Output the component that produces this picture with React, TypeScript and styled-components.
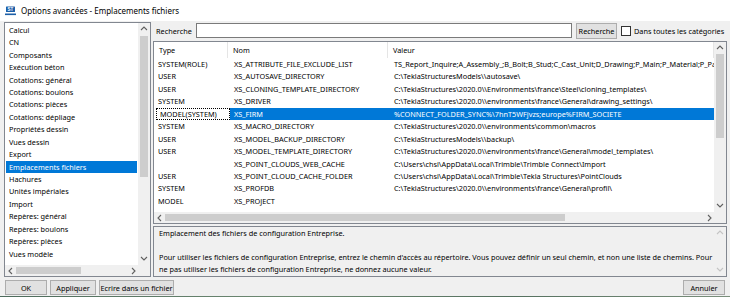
import React from 'react';
import styled, { createGlobalStyle } from 'styled-components';

const FONT = `"Noto Sans", "Open Sans", sans-serif`;
const SEL = '#0078d7';

const GlobalStyle = createGlobalStyle`
  html, body {
    margin: 0;
    padding: 0;
    background: #f0f0f0;
  }
`;

const Window = styled.div`
  width: 730px;
  height: 297px;
  display: flex;
  flex-direction: column;
  background: #f0f0f0;
  font-family: ${FONT};
  font-size: 7.3px;
  color: #000;
  overflow: hidden;
`;

const TitleBar = styled.div`
  height: 21px;
  flex: none;
  display: flex;
  align-items: center;
  gap: 5px;
  padding-left: 5px;
  background: #fff;
  font-size: 8px;
`;

const Body = styled.div`
  height: 255px;
  flex: none;
  display: flex;
  padding: 1px 3px 0 4px;
  gap: 2px;
`;

const CategoryPanel = styled.div`
  width: 145px;
  flex: none;
  display: flex;
  flex-direction: column;
  border: 1px solid #828790;
  background: #fff;
`;

const ListArea = styled.div`
  flex: 1;
  display: flex;
  min-height: 0;
`;

const ListItems = styled.div`
  flex: 1;
  padding: 0.8px 1px 0 1px;
  overflow: hidden;
`;

const ListItem = styled.div<{ $selected?: boolean }>`
  height: 12.45px;
  line-height: 12.45px;
  padding-left: 3px;
  white-space: nowrap;
  background: ${(p) => (p.$selected ? SEL : 'transparent')};
  color: ${(p) => (p.$selected ? '#fff' : '#000')};
`;

const VScroll = styled.div`
  width: 12px;
  flex: none;
  display: flex;
  flex-direction: column;
  background: #f0f0f0;
`;

const HScroll = styled.div`
  height: 11px;
  flex: none;
  display: flex;
  background: #f0f0f0;
`;

const ArrowBox = styled.div<{ $w?: number; $h?: number }>`
  width: ${(p) => p.$w ?? 12}px;
  height: ${(p) => p.$h ?? 12}px;
  flex: none;
  display: flex;
  align-items: center;
  justify-content: center;
`;

const Track = styled.div<{ $vertical?: boolean }>`
  flex: 1;
  display: flex;
  flex-direction: ${(p) => (p.$vertical ? 'column' : 'row')};
  min-width: 0;
  min-height: 0;
`;

const Thumb = styled.div<{ $vertical?: boolean; $offset: number; $length: number }>`
  flex: none;
  background: #cdcdcd;
  ${(p) =>
    p.$vertical
      ? `margin: ${p.$offset}px 2px 0 2px; height: ${p.$length}px;`
      : `margin: 2px 0 2px ${p.$offset}px; width: ${p.$length}px;`}
`;

const Corner = styled.div`
  width: 12px;
  flex: none;
  background: #f0f0f0;
`;

const RightPane = styled.div`
  flex: 1;
  display: flex;
  flex-direction: column;
  min-width: 0;
`;

const SearchRow = styled.div`
  height: 17px;
  flex: none;
  display: flex;
  align-items: center;
  padding-left: 3px;
  margin-bottom: 2px;
`;

const SearchLabel = styled.span`
  width: 40px;
  flex: none;
`;

const SearchInput = styled.div`
  width: 374px;
  height: 13px;
  flex: none;
  background: #fff;
  border: 1px solid #7a7a7a;
`;

const Button = styled.div<{ $width: number }>`
  width: ${(p) => p.$width}px;
  height: 15px;
  flex: none;
  box-sizing: border-box;
  display: flex;
  align-items: center;
  justify-content: center;
  background: #e1e1e1;
  border: 1px solid #adadad;
  white-space: nowrap;
`;

const SearchButton = styled(Button)`
  margin-left: 4px;
  height: 16px;
`;

const CheckBox = styled.div`
  width: 8px;
  height: 8px;
  flex: none;
  margin-left: 4px;
  background: #fff;
  border: 1px solid #333;
`;

const CheckLabel = styled.span`
  margin-left: 3px;
  white-space: nowrap;
`;

const Grid = styled.div`
  height: 181px;
  flex: none;
  display: flex;
  flex-direction: column;
  border: 1px solid #828790;
  background: #fff;
`;

const GridMain = styled.div`
  flex: 1;
  display: flex;
  min-height: 0;
`;

const GridBody = styled.div`
  flex: 1;
  min-width: 0;
  overflow: hidden;
`;

const HeaderRow = styled.div`
  height: 16px;
  display: flex;
`;

const HeaderCell = styled.div<{ $width?: number }>`
  ${(p) => (p.$width ? `width: ${p.$width}px; flex: none;` : 'flex: 1;')}
  box-sizing: border-box;
  padding-left: 5px;
  line-height: 16px;
  border-right: 1px solid #e5e5e5;
  white-space: nowrap;
`;

const GridRow = styled.div`
  height: 12.45px;
  display: flex;
`;

const Cell = styled.div<{ $width?: number; $selected?: boolean }>`
  ${(p) => (p.$width ? `width: ${p.$width}px; flex: none;` : 'flex: 1;')}
  box-sizing: border-box;
  padding-left: 4px;
  line-height: 12.45px;
  white-space: nowrap;
  overflow: hidden;
  background: ${(p) => (p.$selected ? SEL : 'transparent')};
  color: ${(p) => (p.$selected ? '#fff' : '#000')};
`;

const FocusCell = styled.div`
  width: 74px;
  flex: none;
  box-sizing: border-box;
  padding-left: 3px;
  margin-left: 2px;
  line-height: 10.45px;
  border: 1px dotted #000;
  white-space: nowrap;
`;

const Description = styled.div`
  height: 49px;
  flex: none;
  margin-top: 2px;
  display: flex;
  border: 1px solid #828790;
  background: #f0f0f0;
`;

const DescText = styled.div`
  flex: 1;
  padding-left: 5px;
  line-height: 12px;
  white-space: pre;
  overflow: hidden;
`;

const ButtonBar = styled.div`
  height: 17px;
  flex: none;
  margin-top: 2px;
  display: flex;
  align-items: center;
  gap: 3px;
  padding: 0 5px;
`;

const Spacer = styled.div`
  flex: 1;
`;

const DesktopStrip = styled.div`
  flex: 1;
  background: linear-gradient(90deg, #4d6b5c, #6f8a73 40%, #55705f 70%, #7a8f7c);
`;

const Chevron = ({ dir, light }: { dir: 'up' | 'down' | 'left' | 'right'; light?: boolean }) => {
  const pts = {
    up: '1,5 4,2 7,5',
    down: '1,2 4,5 7,2',
    left: '5,1 2,4 5,7',
    right: '3,1 6,4 3,7',
  }[dir];
  return (
    <svg width="8" height="8" viewBox="0 0 8 8">
      <polyline points={pts} fill="none" stroke={light ? '#c4c4c4' : '#606060'} strokeWidth="1.1" />
    </svg>
  );
};

const TeklaIcon = () => (
  <svg width="11" height="10" viewBox="0 0 11 10">
    <rect x="1" y="0.5" width="9" height="5.5" rx="0.5" fill="#1c5fa8" />
    <text x="5.5" y="5" fontSize="4.5" fill="#fff" textAnchor="middle" fontFamily="Liberation Sans, sans-serif" fontWeight="bold">
      ST
    </text>
    <rect x="0" y="7.5" width="11" height="1.6" fill="#1c5fa8" />
  </svg>
);

const categories = [
  'Calcul',
  'CN',
  'Composants',
  'Exécution béton',
  'Cotations: général',
  'Cotations: boulons',
  'Cotations: pièces',
  'Cotations: dépliage',
  'Propriétés dessin',
  'Vues dessin',
  'Export',
  'Emplacements fichiers',
  'Hachures',
  'Unités impériales',
  'Import',
  'Repères: général',
  'Repères: boulons',
  'Repères: pièces',
  'Vues modèle',
];

const rows = [
  ['SYSTEM(ROLE)', 'XS_ATTRIBUTE_FILE_EXCLUDE_LIST', 'TS_Report_Inquire;A_Assembly_;B_Bolt;B_Stud;C_Cast_Unit;D_Drawing;P_Main;P_Material;P_Part;P_Profile'],
  ['USER', 'XS_AUTOSAVE_DIRECTORY', 'C:\\TeklaStructuresModels\\\\autosave\\'],
  ['USER', 'XS_CLONING_TEMPLATE_DIRECTORY', 'C:\\TeklaStructures\\2020.0\\\\Environments\\france\\Steel\\cloning_templates\\'],
  ['SYSTEM', 'XS_DRIVER', 'C:\\TeklaStructures\\2020.0\\\\environments\\france\\General\\drawing_settings\\'],
  ['MODEL(SYSTEM)', 'XS_FIRM', '%CONNECT_FOLDER_SYNC%\\7hnT5WFjvzs;europe%FIRM_SOCIETE'],
  ['SYSTEM', 'XS_MACRO_DIRECTORY', 'C:\\TeklaStructures\\2020.0\\\\environments\\common\\macros'],
  ['USER', 'XS_MODEL_BACKUP_DIRECTORY', 'C:\\TeklaStructuresModels\\\\backup\\'],
  ['USER', 'XS_MODEL_TEMPLATE_DIRECTORY', 'C:\\TeklaStructures\\2020.0\\\\environments\\france\\General\\model_templates\\'],
  ['', 'XS_POINT_CLOUDS_WEB_CACHE', 'C:\\Users\\chsi\\AppData\\Local\\Trimble\\Trimble Connect\\Import'],
  ['USER', 'XS_POINT_CLOUD_CACHE_FOLDER', 'C:\\Users\\chsi\\AppData\\Local\\Trimble\\Tekla Structures\\PointClouds'],
  ['SYSTEM', 'XS_PROFDB', 'C:\\TeklaStructures\\2020.0\\\\environments\\france\\General\\profil\\'],
  ['MODEL', 'XS_PROJECT', ''],
];

const SELECTED_ROW = 4;

const description = [
  'Emplacement des fichiers de configuration Entreprise.',
  '',
  "Pour utiliser les fichiers de configuration Entreprise, entrez le chemin d'accès au répertoire. Vous pouvez définir un seul chemin, et non une liste de chemins. Pour",
  'ne pas utiliser les fichiers de configuration Entreprise, ne donnez aucune valeur.',
].join('\n');

export default function App() {
  return (
    <Window>
      <GlobalStyle />
      <TitleBar>
        <TeklaIcon />
        Options avancées - Emplacements fichiers
      </TitleBar>

      <Body>
        <CategoryPanel>
          <ListArea>
            <ListItems>
              {categories.map((c) => (
                <ListItem key={c} $selected={c === 'Emplacements fichiers'}>
                  {c}
                </ListItem>
              ))}
            </ListItems>
            <VScroll>
              <ArrowBox>
                <Chevron dir="up" />
              </ArrowBox>
              <Track $vertical>
                <Thumb $vertical $offset={1} $length={141} />
              </Track>
              <ArrowBox>
                <Chevron dir="down" />
              </ArrowBox>
            </VScroll>
          </ListArea>
          <HScroll>
            <ArrowBox $w={11} $h={11}>
              <Chevron dir="left" />
            </ArrowBox>
            <Track>
              <Thumb $offset={0} $length={65} />
            </Track>
            <ArrowBox $w={11} $h={11}>
              <Chevron dir="right" />
            </ArrowBox>
            <Corner />
          </HScroll>
        </CategoryPanel>

        <RightPane>
          <SearchRow>
            <SearchLabel>Recherche</SearchLabel>
            <SearchInput />
            <SearchButton $width={41}>Recherche</SearchButton>
            <CheckBox />
            <CheckLabel>Dans toutes les catégories</CheckLabel>
          </SearchRow>

          <Grid>
            <GridMain>
              <GridBody>
                <HeaderRow>
                  <HeaderCell $width={74}>Type</HeaderCell>
                  <HeaderCell $width={160}>Nom</HeaderCell>
                  <HeaderCell>Valeur</HeaderCell>
                </HeaderRow>
                {rows.map(([type, name, value], i) =>
                  i === SELECTED_ROW ? (
                    <GridRow key={name}>
                      <FocusCell>{type}</FocusCell>
                      <Cell $width={160} $selected>
                        {name}
                      </Cell>
                      <Cell $selected>{value}</Cell>
                    </GridRow>
                  ) : (
                    <GridRow key={name}>
                      <Cell $width={76}>{type}</Cell>
                      <Cell $width={160}>{name}</Cell>
                      <Cell>{value}</Cell>
                    </GridRow>
                  ),
                )}
              </GridBody>
              <VScroll>
                <ArrowBox>
                  <Chevron dir="up" />
                </ArrowBox>
                <Track $vertical>
                  <Thumb $vertical $offset={0} $length={84} />
                </Track>
                <ArrowBox>
                  <Chevron dir="down" />
                </ArrowBox>
              </VScroll>
            </GridMain>
            <HScroll>
              <ArrowBox $w={11} $h={11}>
                <Chevron dir="left" />
              </ArrowBox>
              <Track>
                <Thumb $offset={0} $length={400} />
              </Track>
              <ArrowBox $w={11} $h={11}>
                <Chevron dir="right" />
              </ArrowBox>
              <Corner />
            </HScroll>
          </Grid>

          <Description>
            <DescText>{description}</DescText>
            <VScroll>
              <ArrowBox>
                <Chevron dir="up" light />
              </ArrowBox>
              <Track $vertical />
              <ArrowBox>
                <Chevron dir="down" light />
              </ArrowBox>
            </VScroll>
          </Description>
        </RightPane>
      </Body>

      <ButtonBar>
        <Button $width={42}>OK</Button>
        <Button $width={46}>Appliquer</Button>
        <Button $width={75}>Ecrire dans un fichier</Button>
        <Spacer />
        <Button $width={42}>Annuler</Button>
      </ButtonBar>
      <DesktopStrip />
    </Window>
  );
}
